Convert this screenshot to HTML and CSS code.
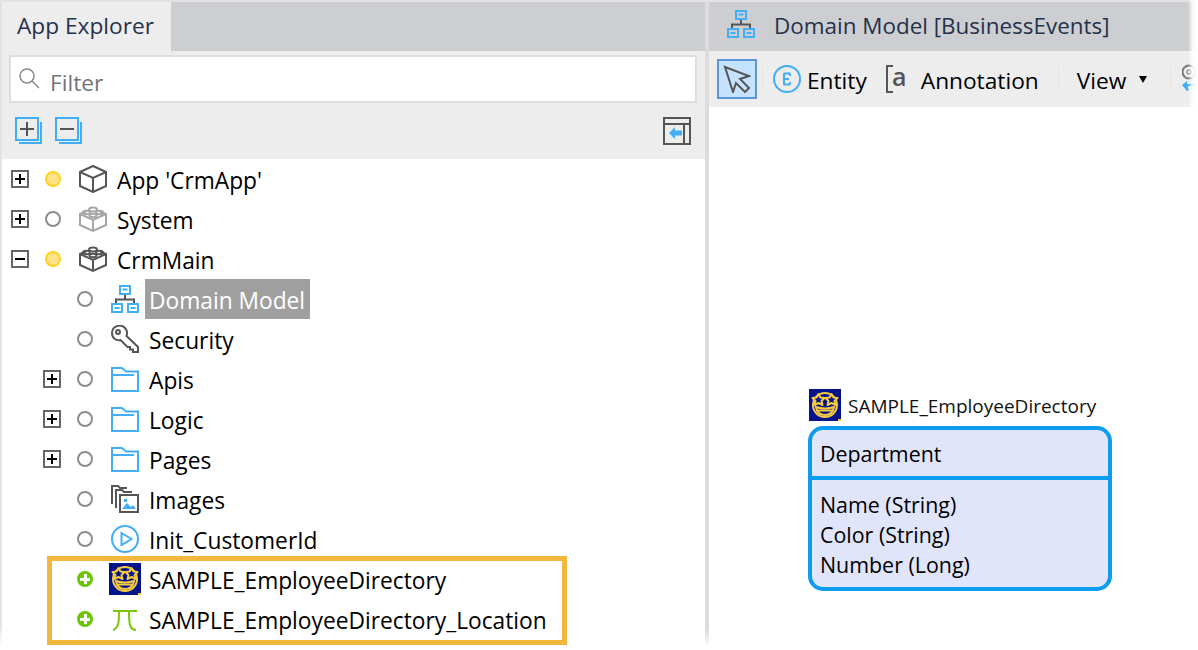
FILE: index.html
```html
<!DOCTYPE html>
<html lang="en">
<head>
<meta charset="utf-8">
<title>Domain Model</title>
<link rel="stylesheet" href="styles.css">
</head>
<body>
<svg class="defs" width="0" height="0" aria-hidden="true">
  <defs>
    <symbol id="i-plusbox" viewBox="0 0 18 18"><rect x="1" y="1" width="16" height="16" fill="#fff" stroke="#666" stroke-width="2"/><path d="M4 9h10M9 4v10" stroke="#000" stroke-width="2"/></symbol>
    <symbol id="i-minusbox" viewBox="0 0 18 18"><rect x="1" y="1" width="16" height="16" fill="#fff" stroke="#666" stroke-width="2"/><path d="M4 9h10" stroke="#000" stroke-width="2"/></symbol>
    <symbol id="i-brick" viewBox="0 0 28 28"><g fill="none" stroke="currentColor" stroke-width="2"><path d="M7 6.500 1 9v11l13 6 13-6V9l-6-2.500"/><path d="M1 9l13 6 13-6M14 15v11"/><ellipse cx="14" cy="4.500" rx="4" ry="2"/><ellipse cx="7.500" cy="7.500" rx="3.500" ry="1.800"/><ellipse cx="20.500" cy="7.500" rx="3.500" ry="1.800"/><ellipse cx="14" cy="10.500" rx="3.500" ry="1.800"/></g></symbol>
    <symbol id="i-domain" viewBox="0 0 28 28"><path d="M14 9v6M5 18v-3.500h18V18" fill="none" stroke="#555" stroke-width="2"/><g fill="none" stroke="#42aef5" stroke-width="2"><rect x="9" y="1" width="10" height="8"/><rect x="1" y="19" width="10" height="8"/><rect x="17" y="19" width="10" height="8"/></g><path d="M11.500 4.500h5M3.500 23h5M19.500 23h5" stroke="#42aef5" stroke-width="2"/></symbol>
    <symbol id="i-folder" viewBox="0 0 28 28"><path d="M1 3h10l4 3.500h12V26H1z M1 10h22" fill="none" stroke="#42aef5" stroke-width="2"/></symbol>
    <symbol id="i-face" viewBox="0 0 32 32"><rect width="32" height="32" fill="#03138a"/><rect x="29" y="30" width="3" height="2" fill="#f5c83c"/><g fill="none" stroke="#f6ca3e" stroke-width="2"><circle cx="16" cy="16" r="12"/><path d="M7 18c6 2 12 2 18 0-1 6-5 8-9 8s-8-2-9-8z"/><path d="M9 21.500h14"/></g><g fill="#03138a" stroke="#f6ca3e" stroke-width="2" stroke-linejoin="round"><path d="M9.500 5l2 3.500 4 .5-3 3 1 4-4-2-4 2 1-4-3-3 4-.5z"/><path d="M22.500 5l2 3.500 4 .5-3 3 1 4-4-2-4 2 1-4-3-3 4-.5z"/></g></symbol>
  </defs>
</svg>

<main class="app">
  <section class="explorer">
    <div class="tabbar"><div class="tab">App Explorer</div></div>
    <div class="filter-wrap">
      <div class="filter">
        <svg class="filter-icon" viewBox="0 0 22 22" width="22" height="22"><circle cx="9" cy="9" r="7" fill="none" stroke="#8a8a8a" stroke-width="1.500"/><path d="M14 14l7 7" stroke="#8a8a8a" stroke-width="1.500"/></svg>
        <span class="filter-text">Filter</span>
      </div>
    </div>
    <div class="tree-tools">
      <svg class="tool" viewBox="0 0 28 28" width="28" height="28"><rect x="1" y="1" width="22" height="22" fill="none" stroke="#42aef5" stroke-width="2"/><path d="M26 5v21H4" fill="none" stroke="#42aef5" stroke-width="2"/><path d="M5 12h14M12 5v14" stroke="#555" stroke-width="2"/></svg>
      <svg class="tool" viewBox="0 0 28 28" width="28" height="28"><rect x="1" y="1" width="22" height="22" fill="none" stroke="#42aef5" stroke-width="2"/><path d="M26 5v21H4" fill="none" stroke="#42aef5" stroke-width="2"/><path d="M5 12h14" stroke="#555" stroke-width="2"/></svg>
      <svg class="tool tool-end" viewBox="0 0 28 28" width="28" height="28"><path d="M1 1h26v26H1zM1 7h26M21 7v20" fill="none" stroke="#555" stroke-width="2"/><path d="M6 16l6-6v3.500h7v5h-7V22z" fill="#42aef5"/></svg>
    </div>

    <div class="tree">
      <div class="row lv0">
        <svg class="exp"><use href="#i-plusbox"/></svg><span class="dot dot-yellow"></span>
        <svg class="ico" viewBox="0 0 28 28"><path d="M14 1 27 7v14l-13 6-13-6V7zM1 7l13 6 13-6M14 13v14" fill="none" stroke="#555" stroke-width="2"/></svg>
        <span class="label">App 'CrmApp'</span>
      </div>
      <div class="row lv0">
        <svg class="exp"><use href="#i-plusbox"/></svg><span class="dot"></span>
        <svg class="ico brick-light"><use href="#i-brick"/></svg>
        <span class="label">System</span>
      </div>
      <div class="row lv0">
        <svg class="exp"><use href="#i-minusbox"/></svg><span class="dot dot-yellow"></span>
        <svg class="ico brick-dark"><use href="#i-brick"/></svg>
        <span class="label">CrmMain</span>
      </div>
      <div class="row lv1">
        <span class="exp"></span><span class="dot"></span>
        <svg class="ico"><use href="#i-domain"/></svg>
        <span class="label label-selected">Domain Model</span>
      </div>
      <div class="row lv1">
        <span class="exp"></span><span class="dot"></span>
        <svg class="ico" viewBox="0 0 28 28"><g fill="none" stroke="#555" stroke-width="2"><path d="M1 8a7.500 7.500 0 0 1 13-5c2 2 2.500 5 1.500 8L27 22v5h-5v-2.500h-3V22h-2.500L9.500 15C5 16 1 13 1 8z"/><circle cx="7" cy="7" r="2"/></g></svg>
        <span class="label">Security</span>
      </div>
      <div class="row lv1">
        <svg class="exp"><use href="#i-plusbox"/></svg><span class="dot"></span>
        <svg class="ico"><use href="#i-folder"/></svg>
        <span class="label">Apis</span>
      </div>
      <div class="row lv1">
        <svg class="exp"><use href="#i-plusbox"/></svg><span class="dot"></span>
        <svg class="ico"><use href="#i-folder"/></svg>
        <span class="label">Logic</span>
      </div>
      <div class="row lv1">
        <svg class="exp"><use href="#i-plusbox"/></svg><span class="dot"></span>
        <svg class="ico"><use href="#i-folder"/></svg>
        <span class="label">Pages</span>
      </div>
      <div class="row lv1">
        <span class="exp"></span><span class="dot"></span>
        <svg class="ico" viewBox="0 0 28 28"><g fill="none" stroke="#555" stroke-width="2"><path d="M1 19V1h6l2 2h7"/><path d="M5 23V5h6l2 2h8"/><rect x="9" y="10" width="18" height="17"/></g><path d="M11 24l5-6 4 4 2-2 3 4zM13 14h3v3h-3z" fill="#42aef5"/></svg>
        <span class="label">Images</span>
      </div>
      <div class="row lv1">
        <span class="exp"></span><span class="dot"></span>
        <svg class="ico" viewBox="0 0 28 28"><circle cx="14" cy="14" r="13" fill="none" stroke="#42aef5" stroke-width="2"/><path d="M10.500 8l10 6-10 6z" fill="none" stroke="#42aef5" stroke-width="2"/></svg>
        <span class="label">Init_CustomerId</span>
      </div>
      <div class="row lv1">
        <span class="exp"></span><span class="dot dot-add"></span>
        <svg class="face"><use href="#i-face"/></svg>
        <span class="label">SAMPLE_EmployeeDirectory</span>
      </div>
      <div class="row lv1">
        <span class="exp"></span><span class="dot dot-add"></span>
        <svg class="ico" viewBox="0 0 28 28"><path d="M2 6h24M8 6c0 10 0 17-6 19M18 6c0 11 0 19 7 19" fill="none" stroke="#7ac70c" stroke-width="2"/></svg>
        <span class="label">SAMPLE_EmployeeDirectory_Location</span>
      </div>
      <div class="callout"></div>
    </div>
  </section>

  <div class="splitter"></div>

  <section class="editor">
    <div class="doc-title">
      <svg class="doc-icon"><use href="#i-domain"/></svg>
      <span class="doc-text">Domain Model [BusinessEvents]</span>
    </div>
    <div class="doc-tools">
      <span class="pointer-btn">
        <svg viewBox="0 0 28 28" width="28" height="28"><path d="M2 2l24 9-9 3 9 9-4 4-9-9-3 9z" fill="none" stroke="#555" stroke-width="2"/></svg>
      </span>
      <span class="sep"></span>
      <span class="tool-item tool-entity">
        <svg viewBox="0 0 28 28" width="28" height="28"><circle cx="14" cy="14" r="13" fill="none" stroke="#42aef5" stroke-width="2"/><path d="M10.500 8.500h7M10.500 19.500h7M11 8.500v11M11 14h5M17 9v2M17 17v2" stroke="#42aef5" stroke-width="2" fill="none"/></svg>
        <span class="tool-text">Entity</span>
      </span>
      <span class="tool-item tool-note">
        <svg class="note-icon" viewBox="0 0 24 28" width="24" height="28"><path d="M7 1H1v26h6" fill="none" stroke="#555" stroke-width="2"/><text class="note-a" x="6" y="21">a</text></svg>
        <span class="tool-text">Annotation</span>
      </span>
      <span class="sep sep-a"></span>
      <span class="tool-view tool-text">View</span>
      <span class="caret"></span>
      <span class="sep sep-b"></span>
      <svg class="cut-icon" viewBox="0 0 14 30" width="14" height="30"><circle cx="7" cy="8" r="6.500" fill="none" stroke="#777" stroke-width="2"/><circle cx="7" cy="8" r="2" fill="none" stroke="#999" stroke-width="1.500"/><path d="M0 21l5-4v3h8v2H8c-2 0-3 1-1 4l-2 1-5-6z" fill="#42aef5"/></svg>
    </div>
    <div class="canvas">
      <div class="entity">
        <div class="entity-name">
          <svg class="face"><use href="#i-face"/></svg>
          <span class="entity-title">SAMPLE_EmployeeDirectory</span>
        </div>
        <div class="entity-box">
          <div class="entity-head">Department</div>
          <div class="entity-attrs">
            <div>Name (String)</div>
            <div>Color (String)</div>
            <div>Number (Long)</div>
          </div>
        </div>
      </div>
    </div>
  </section>
  <div class="fade"></div>
</main>
</body>
</html>
```

FILE: styles.css
```css
* { box-sizing: border-box; }
html, body { margin: 0; padding: 0; }
body {
  width: 1198px;
  height: 650px;
  overflow: hidden;
  background: #fff;
  font-family: "Open Sans", "Noto Sans", "Liberation Sans", sans-serif;
  color: #000;
}
.defs { position: absolute; }
.app {
  position: relative;
  display: flex;
  width: 1198px;
  height: 650px;
  padding: 2px 0 0 2px;
  background: linear-gradient(#e2e2e2 2px, #fff 2px);
  overflow: hidden;
}
.app::before {
  content: "";
  position: absolute;
  left: 0; top: 0; bottom: 2px;
  width: 2px;
  background: linear-gradient(#e2e2e2 96%, #fff);
}

/* explorer */
.explorer {
  width: 703px;
  flex: none;
  display: flex;
  flex-direction: column;
  background: #fff;
}
.tabbar { height: 49px; background: #cdced1; flex: none; }
.tab {
  width: 169px;
  height: 49px;
  background: #ededee;
  padding-left: 15px;
  font-size: 22.700px;
  line-height: 47px;
  color: #25324a;
}
.filter-wrap { background: #ededee; padding: 4px 8px 0 7px; flex: none; }
.filter {
  height: 48px;
  background: #fff;
  border: 2px solid #dedede;
  display: flex;
  align-items: center;
  padding-left: 7px;
  gap: 10px;
}
.filter-icon { flex: none; margin-top: -3px; }
.filter-text { font-size: 22.700px; line-height: 30px; color: #707478; padding-top: 8px; }
.tree-tools {
  height: 56px;
  background: #ededee;
  display: flex;
  align-items: flex-start;
  padding: 14px 14px 0 13px;
  gap: 12px;
  flex: none;
}
.tool { flex: none; }
.tool-end { margin-left: auto; }

.tree { position: relative; flex: 1; }
.row {
  height: 40px;
  display: flex;
  align-items: center;
  font-size: 22.750px;
}
.lv0 { padding-left: 9px; }
.lv1 { padding-left: 41px; }
.exp { width: 18px; height: 18px; flex: none; }
.dot {
  width: 16px;
  height: 16px;
  margin-left: 16px;
  margin-right: 18px;
  border-radius: 50%;
  border: 2px solid #8c8c8c;
  background: #fff;
  flex: none;
  position: relative;
}
.dot-yellow { background: #ffe28a; border-color: #ffd21f; }
.dot-add { background: #6cc500; border-color: #6cc500; }
.dot-add::before, .dot-add::after {
  content: "";
  position: absolute;
  background: #fff;
}
.dot-add::before { left: 1px; top: 4.500px; width: 10px; height: 3px; }
.dot-add::after { left: 4.500px; top: 1px; width: 3px; height: 10px; }
.ico { width: 28px; height: 28px; flex: none; }
.face { width: 32px; height: 32px; flex: none; }
.row .face { margin-left: -2px; margin-right: -2px; }
.brick-light { color: #a6a6a6; }
.brick-dark { color: #555; }
.label {
  margin-left: 10px;
  height: 40px;
  padding-top: 3px;
  line-height: 37px;
  white-space: nowrap;
}
.label-selected {
  margin-left: 6px;
  padding-left: 4px;
  padding-right: 5px;
  background: #9f9f9f;
  color: #fff;
}
.callout {
  position: absolute;
  left: 45px;
  top: 397px;
  width: 520px;
  height: 89px;
  border: 5px solid #f2b73c;
  pointer-events: none;
}

/* separator + editor */
.splitter {
  width: 4px;
  flex: none;
  margin-bottom: 2px;
  background: linear-gradient(#dcdcdc 97%, #fff);
}
.editor {
  flex: 1;
  display: flex;
  flex-direction: column;
  min-width: 0;
  position: relative;
}
.doc-title {
  height: 49px;
  background: #cdced1;
  display: flex;
  align-items: center;
  padding-left: 18px;
  gap: 19px;
  color: #25324a;
  flex: none;
}
.doc-text { font-size: 22.450px; margin-top: -2px; }
.doc-icon { width: 28px; height: 28px; flex: none; margin-top: -5px; }
.doc-tools {
  height: 56px;
  background: #ededee;
  position: relative;
  display: flex;
  align-items: center;
  padding-left: 8px;
  font-size: 22.700px;
  flex: none;
}
.tool-text { padding-top: 2px; }
.pointer-btn {
  width: 40px;
  height: 40px;
  background: #c5e3ff;
  border: 2px solid #5b96d8;
  display: flex;
  align-items: center;
  justify-content: center;
  flex: none;
}
.sep {
  width: 1px;
  height: 24px;
  background: #e3e3e3;
  flex: none;
}
.pointer-btn + .sep { margin-left: 5px; }
.tool-item { display: flex; align-items: center; gap: 6px; flex: none; }
.tool-entity { margin-left: 10px; }
.tool-note { margin-left: 19px; gap: 11px; }
.note-icon { overflow: visible; }
.note-a { font-size: 25px; fill: #555; font-family: "Open Sans", sans-serif; font-weight: 600; }
.sep-a { margin-left: 19px; }
.tool-view { margin-left: 18px; }
.caret {
  width: 0; height: 0;
  margin-left: 13px;
  border-left: 4.500px solid transparent;
  border-right: 4.500px solid transparent;
  border-top: 7px solid #000;
  flex: none;
}
.sep-b { margin-left: 23px; }
.cut-icon { margin-left: 11px; flex: none; }
.canvas { flex: 1; position: relative; background: #fff; }
.entity {
  position: absolute;
  left: 99px;
  top: 282px;
  width: 304px;
}
.entity-name {
  display: flex;
  align-items: center;
  gap: 7px;
  height: 32px;
  font-size: 19px;
  color: #111;
  margin-left: 1px;
}
.entity-title { padding-top: 2px; }
.entity-box {
  margin-top: 5px;
  height: 165px;
  border: 4px solid #0d9cf0;
  border-radius: 15px;
  background: #e1e5fb;
  font-size: 21.400px;
}
.entity-head {
  height: 50px;
  padding-left: 8px;
  line-height: 48px;
  border-bottom: 4px solid #0d9cf0;
}
.entity-attrs {
  padding: 10px 0 0 8px;
  line-height: 30px;
}
.fade {
  position: absolute;
  right: 0; top: 0; bottom: 0;
  width: 10px;
  background: linear-gradient(90deg, rgba(255,255,255,0), rgba(255,255,255,.85) 45%, #fff);
  pointer-events: none;
}
```
